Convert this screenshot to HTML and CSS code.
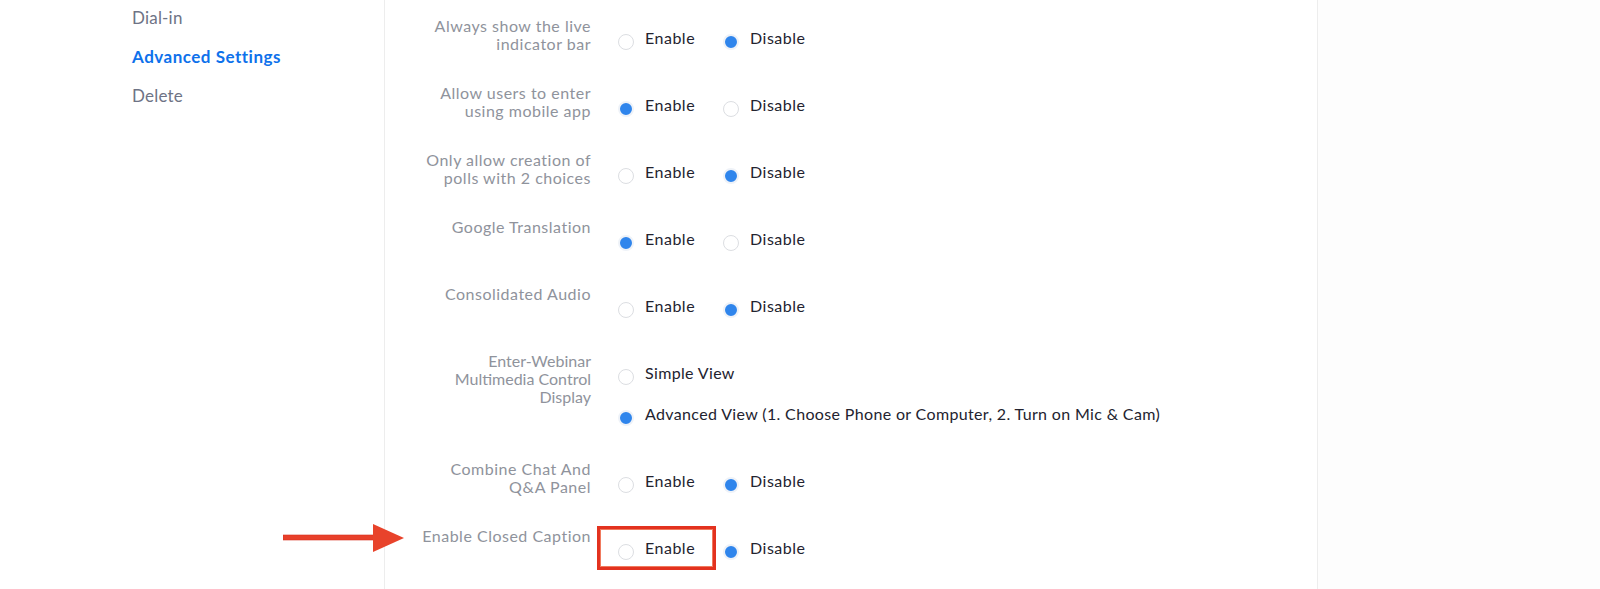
FILE: index.html
```html
<!DOCTYPE html>
<html lang="en">
<head>
<meta charset="utf-8">
<title>Advanced Settings</title>
<link rel="stylesheet" href="styles.css">
</head>
<body>
<div class="page">
  <nav class="sidebar">
    <a class="nav-item">Dial-in</a>
    <a class="nav-item active">Advanced Settings</a>
    <a class="nav-item">Delete</a>
  </nav>
  <main class="content">
    <div class="row">
      <div class="label">Always show the live<br>indicator bar</div>
      <div class="options">
        <span class="option"><span class="radio"></span>Enable</span>
        <span class="option"><span class="radio on"></span>Disable</span>
      </div>
    </div>
    <div class="row">
      <div class="label">Allow users to enter<br>using mobile app</div>
      <div class="options">
        <span class="option"><span class="radio on"></span>Enable</span>
        <span class="option"><span class="radio"></span>Disable</span>
      </div>
    </div>
    <div class="row">
      <div class="label">Only allow creation of<br>polls with 2 choices</div>
      <div class="options">
        <span class="option"><span class="radio"></span>Enable</span>
        <span class="option"><span class="radio on"></span>Disable</span>
      </div>
    </div>
    <div class="row">
      <div class="label">Google Translation</div>
      <div class="options">
        <span class="option"><span class="radio on"></span>Enable</span>
        <span class="option"><span class="radio"></span>Disable</span>
      </div>
    </div>
    <div class="row">
      <div class="label">Consolidated Audio</div>
      <div class="options">
        <span class="option"><span class="radio"></span>Enable</span>
        <span class="option"><span class="radio on"></span>Disable</span>
      </div>
    </div>
    <div class="row tall">
      <div class="label condensed">Enter-Webinar<br>Multimedia Control<br>Display</div>
      <div class="options stacked">
        <span class="option narrow"><span class="radio"></span>Simple View</span>
        <span class="option narrow"><span class="radio on"></span>Advanced View (1. Choose Phone or Computer, 2. Turn on Mic &amp; Cam)</span>
      </div>
    </div>
    <div class="row">
      <div class="label">Combine Chat And<br>Q&amp;A Panel</div>
      <div class="options">
        <span class="option"><span class="radio"></span>Enable</span>
        <span class="option"><span class="radio on"></span>Disable</span>
      </div>
    </div>
    <div class="row">
      <div class="label">Enable Closed Caption</div>
      <div class="options">
        <span class="option highlighted"><span class="radio"></span>Enable</span>
        <span class="option"><span class="radio on"></span>Disable</span>
      </div>
    </div>
  </main>
  <div class="right-pane"></div>
  <svg class="arrow" width="124" height="30" viewBox="0 0 124 30" aria-hidden="true">
    <rect x="0" y="12" width="92" height="5" fill="#e8402a" stroke="#d7311f" stroke-width="0.6"/>
    <polygon points="90,1 121,15 90,29" fill="#e8432b"/>
  </svg>
</div>
</body>
</html>
```

FILE: styles.css
```css
* { box-sizing: border-box; }

html, body {
  margin: 0;
  padding: 0;
  background: #ffffff;
}

body {
  font-family: "Lato", "Noto Sans", sans-serif;
  width: 1600px;
  height: 589px;
  overflow: hidden;
}

.page {
  position: relative;
  display: flex;
  height: 589px;
}

.sidebar {
  width: 385px;
  flex: none;
  padding: 8px 0 0 132px;
  border-right: 1px solid #ededed;
  display: flex;
  flex-direction: column;
  gap: 19px;
}

.nav-item {
  font-size: 17px;
  line-height: 20px;
  color: #6e7385;
  letter-spacing: 0.2px;
}

.nav-item.active {
  color: #0e71eb;
  font-weight: 700;
  letter-spacing: 0.5px;
}

.content {
  width: 933px;
  flex: none;
  border-right: 1px solid #ededed;
  padding-top: 17px;
}

.right-pane {
  flex: 1;
  background: #fdfdfd;
}

.row {
  display: flex;
  align-items: flex-start;
  min-height: 67px;
}

.row.tall {
  min-height: 108px;
}

.label {
  width: 206px;
  flex: none;
  text-align: right;
  font-size: 16px;
  line-height: 18px;
  letter-spacing: 0.5px;
  color: #8f939c;
}

.label.condensed {
  letter-spacing: 0;
}

.options {
  display: flex;
  gap: 28px;
  margin-left: 27px;
  padding-top: 9px;
}

.options.stacked {
  flex-direction: column;
  gap: 17px;
}

.option {
  position: relative;
  display: flex;
  align-items: flex-start;
  gap: 11px;
  font-size: 16px;
  line-height: 24px;
  letter-spacing: 0.5px;
  color: #23232f;
  white-space: nowrap;
}

.option.narrow {
  letter-spacing: 0.35px;
}

.radio {
  width: 16px;
  height: 16px;
  margin-top: 8px;
  border-radius: 50%;
  border: 1px solid #dcdee2;
  background: #ffffff;
  flex: none;
}

.radio.on {
  border: 2px solid #eef2f8;
  background: #2f85ec;
}

.option.highlighted::after {
  content: "";
  position: absolute;
  left: -21px;
  top: -10px;
  width: 113px;
  height: 38px;
  border: 3px solid #e3321f;
  box-shadow: inset 0 0 0 1px #f07a5e;
}

.arrow {
  position: absolute;
  left: 283px;
  top: 523px;
}
```
